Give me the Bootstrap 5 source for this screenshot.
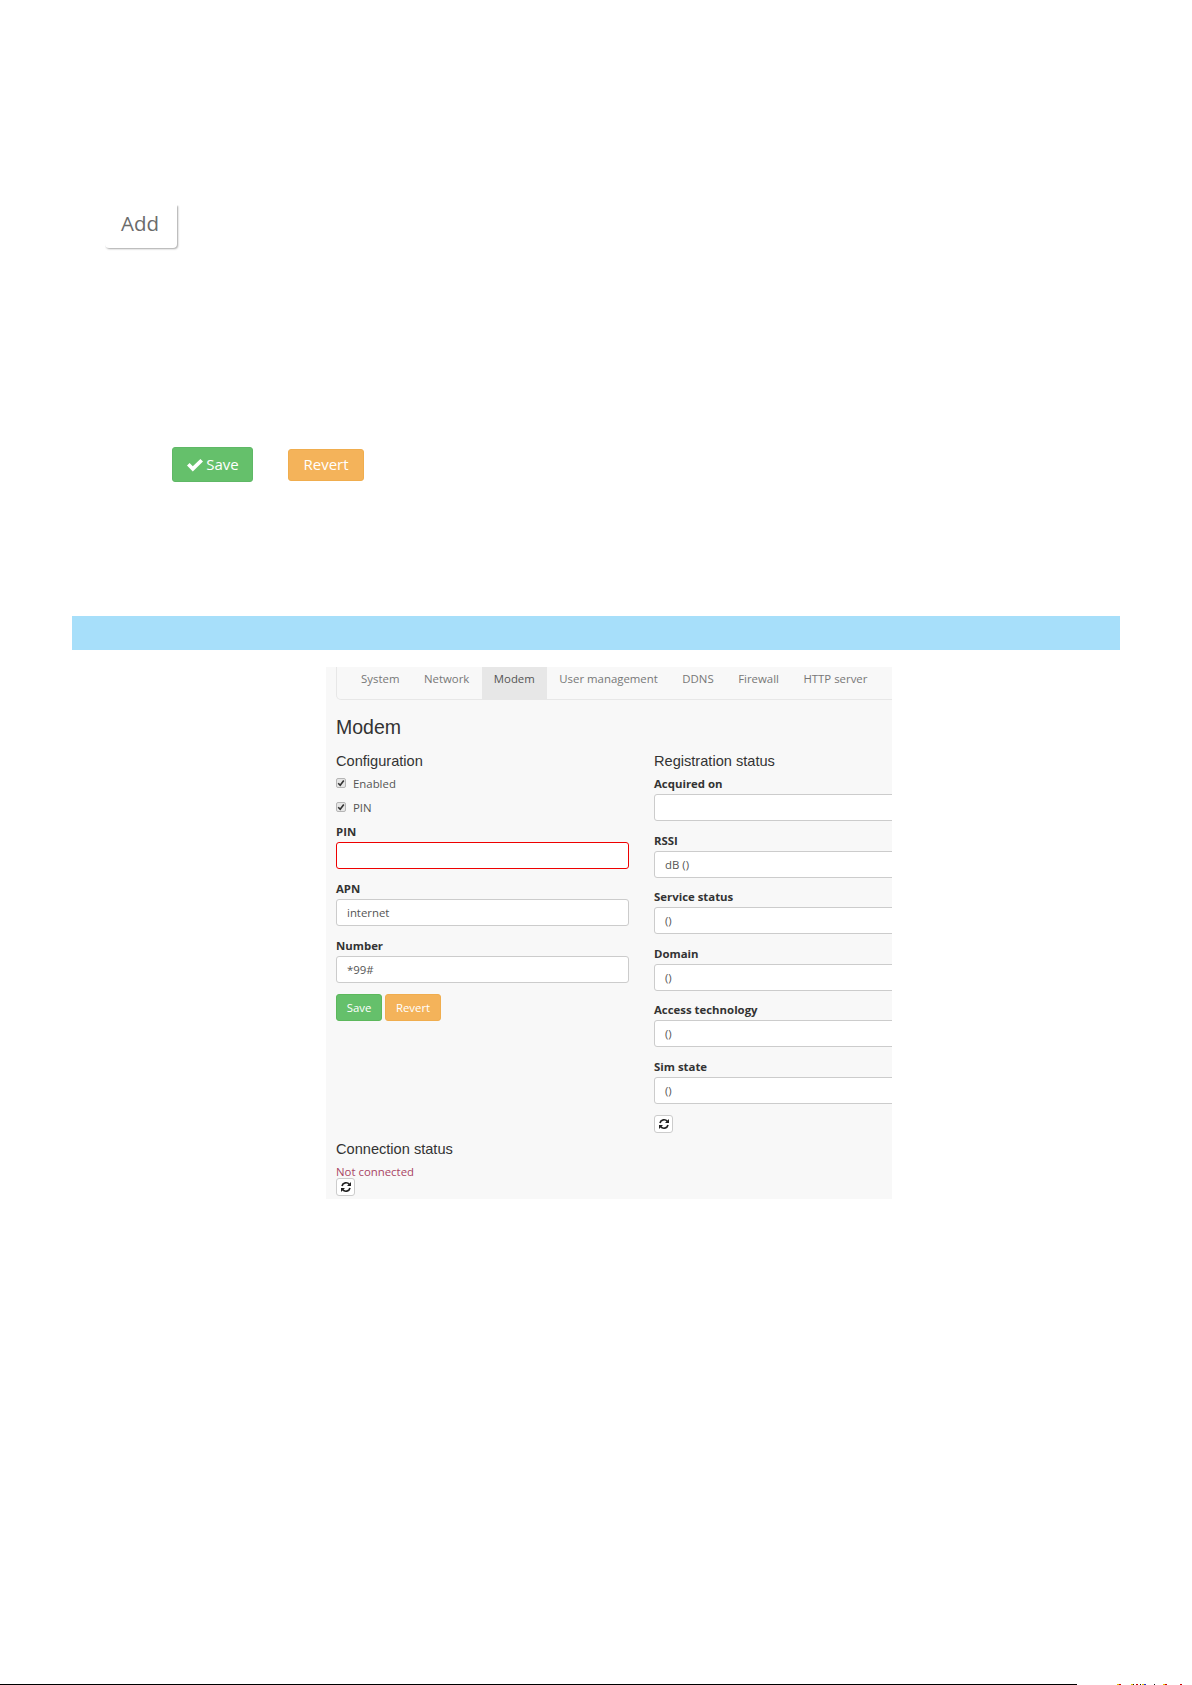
<!DOCTYPE html>
<html lang="en">
<head>
<meta charset="utf-8">
<title>Modem</title>
<link href="https://cdn.jsdelivr.net/npm/bootstrap@5.3.0/dist/css/bootstrap.min.css" rel="stylesheet">
<style>
html,body{margin:0;padding:0;background:#fff;}
body{font-family:"Open Sans","Liberation Sans",sans-serif;color:#333;}
.sheet{min-height:1685px;height:1685px;overflow:hidden;}
.add-zone{padding:205px 0 0 105px;height:248px;}
.add-btn{width:72px;height:43px;background:#fff;border:0;border-radius:0 0 4px 4px;box-shadow:1px 1px 2px rgba(0,0,0,.35);clip-path:inset(0 -4px -4px 0);font-size:20.5px;color:#6b6b6b;padding:0 2px 6px 0;line-height:1;}
.doc-btns{padding:199px 0 0 172px;gap:35px;height:234px;}
.doc-save{width:81px;height:35px;background:#65c06b;border:1px solid #5fb866;border-radius:3px;color:#fff;font-size:15px;padding:0 0 1px;line-height:1;}
.doc-save svg{width:18px;height:14px;vertical-align:-2px;margin-right:2px;}
.doc-rev{width:76px;height:32px;margin-top:2px;background:#f4b35a;border:1px solid #f0ad4e;border-radius:3px;color:#fff;font-size:15px;padding:0 0 2px;line-height:1;}
.band{margin:134px 72px 0 72px;height:34px;background:#a7dffa;}
.shot{margin:17px 0 0 326px;width:566px;height:532px;background:#f8f8f8;overflow:hidden;padding:0 0 0 10px;}
.tabs{width:600px;height:33px;border:1px solid #e7e7e7;border-top:0;border-radius:0 0 5px 5px;padding-left:11.8px;margin-bottom:15px;}
.tabs a{display:block;height:32px;line-height:24px;padding:0 12.25px;font-size:11.4px;color:#777;text-decoration:none;}
.tabs a.on{background:#e7e7e7;color:#555;}
.h-page{font-family:"Liberation Sans",sans-serif;font-size:19.5px;font-weight:400;line-height:24px;margin:0 0 12px;color:#333;}
.h-sub{font-family:"Liberation Sans",sans-serif;font-size:14.6px;font-weight:400;line-height:20px;margin:0 0 4px;color:#333;}
.cols{gap:25px;width:640px;}
.col-l{width:293px;flex:none;}
.col-r{width:320px;flex:none;}
.chk{height:24px;font-size:11.4px;color:#555;gap:7px;}
.chk input{appearance:none;width:10px;height:10px;margin:3px 0 0;border:1px solid #b5b5b5;border-radius:2px;background:#e6e6e6 url("data:image/svg+xml,%3Csvg xmlns='http://www.w3.org/2000/svg' viewBox='0 0 8 8'%3E%3Cpath fill='none' stroke='%23333' stroke-width='1.6' d='M1.2 4.2 3.2 6.2 6.8 1.4'/%3E%3C/svg%3E") center/8px 8px no-repeat;}
.fld{margin-bottom:11px;}
.fld label{display:block;font-size:11.4px;font-weight:700;color:#333;line-height:17px;margin:0 0 2px;}
.boxy{height:27px;background:#fff;border:1px solid #ccc;border-radius:3px;font-size:11.4px;color:#555;padding:0 10px;line-height:25px;}
.boxy.bad{border-color:#ee0000;border-width:1.5px;}
.col-r .fld{margin-bottom:10.6px;}
.col-r .boxy{width:320px;}
.mini-btns{gap:3px;margin-top:6px;}
.m-save,.m-rev{height:27px;border-radius:3px;color:#fff;font-size:11.4px;padding:0;line-height:1;border:1px solid #5cb85c;}
.m-save{width:46px;background:#65c06b;}
.m-rev{width:56px;background:#f4b35a;border-color:#f0ad4e;}
.rfr{display:flex;align-items:center;justify-content:center;padding:0;background:#fff;border:1px solid #ccc;border-radius:3px;width:19px;height:18px;}
.col-r .rfr{margin-top:1px;}
.rfr svg{width:12px;height:12px;}
.conn{margin-top:6px;margin-bottom:0;}
.nc{font-size:11.4px;color:#a94464;line-height:13px;margin-top:6px;}
.footline{gap:40px;height:1px;margin-top:485px;}
.footline i{display:block;width:1077px;height:1px;background:#000;}
.footline svg{display:block;width:70px;height:1px;}
</style>
</head>
<body>
<div class="sheet d-flex flex-column">
  <div class="add-zone"><button type="button" class="add-btn">Add</button></div>
  <div class="doc-btns d-flex align-items-start">
    <button type="button" class="doc-save"><svg viewBox="0 0 18 14"><path fill="#fff" d="M1 7.5 3.6 5l3.2 3.2L14.4 1 17 3.6 6.8 13.4z"/></svg>Save</button>
    <button type="button" class="doc-rev">Revert</button>
  </div>
  <div class="band"></div>
  <div class="shot">
    <nav class="tabs d-flex">
      <a href="#">System</a><a href="#">Network</a><a href="#" class="on">Modem</a><a href="#">User management</a><a href="#">DDNS</a><a href="#">Firewall</a><a href="#">HTTP server</a>
    </nav>
    <h2 class="h-page">Modem</h2>
    <div class="cols d-flex">
      <div class="col-l">
        <h3 class="h-sub">Configuration</h3>
        <div class="chk d-flex"><input type="checkbox" checked><span>Enabled</span></div>
        <div class="chk d-flex"><input type="checkbox" checked><span>PIN</span></div>
        <div class="fld"><label>PIN</label><div class="boxy bad"></div></div>
        <div class="fld"><label>APN</label><div class="boxy">internet</div></div>
        <div class="fld"><label>Number</label><div class="boxy">*99#</div></div>
        <div class="mini-btns d-flex"><button type="button" class="m-save">Save</button><button type="button" class="m-rev">Revert</button></div>
      </div>
      <div class="col-r">
        <h3 class="h-sub">Registration status</h3>
        <div class="fld"><label>Acquired on</label><div class="boxy"></div></div>
        <div class="fld"><label>RSSI</label><div class="boxy">dB ()</div></div>
        <div class="fld"><label>Service status</label><div class="boxy">()</div></div>
        <div class="fld"><label>Domain</label><div class="boxy">()</div></div>
        <div class="fld"><label>Access technology</label><div class="boxy">()</div></div>
        <div class="fld"><label>Sim state</label><div class="boxy">()</div></div>
        <button type="button" class="rfr"><svg viewBox="0 0 12 12"><path fill="none" stroke="#222" stroke-width="1.7" d="M2 5a4.2 4.2 0 0 1 7.4-1.6M10 7a4.2 4.2 0 0 1-7.4 1.6"/><path fill="#222" d="M11 1v4H7zM1 11V7h4z"/></svg></button>
      </div>
    </div>
    <h3 class="h-sub conn">Connection status</h3>
    <div class="nc">Not connected</div>
    <button type="button" class="rfr"><svg viewBox="0 0 12 12"><path fill="none" stroke="#222" stroke-width="1.7" d="M2 5a4.2 4.2 0 0 1 7.4-1.6M10 7a4.2 4.2 0 0 1-7.4 1.6"/><path fill="#222" d="M11 1v4H7zM1 11V7h4z"/></svg></button>
  </div>
  <div class="footline d-flex"><i></i><svg viewBox="0 0 70 1"><rect x="0" width="2" height="1" fill="#e0c000"/><rect x="2" width="2" height="1" fill="#c00"/><rect x="14" width="2" height="1" fill="#e0c000"/><rect x="16" width="1" height="1" fill="#111"/><rect x="19" width="2" height="1" fill="#c00"/><rect x="23" width="1" height="1" fill="#111"/><rect x="25" width="2" height="1" fill="#e0c000"/><rect x="27" width="2" height="1" fill="#23c"/><rect x="37" width="1" height="1" fill="#111"/><rect x="46" width="2" height="1" fill="#e0c000"/><rect x="48" width="2" height="1" fill="#c00"/><rect x="63" width="2" height="1" fill="#c00"/></svg></div>
</div>
<script src="https://cdn.jsdelivr.net/npm/bootstrap@5.3.0/dist/js/bootstrap.bundle.min.js"></script>
</body>
</html>
